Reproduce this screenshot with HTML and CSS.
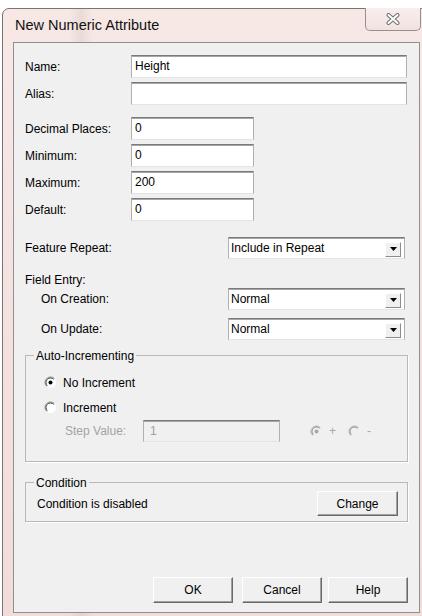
FILE: index.html
```html
<!DOCTYPE html>
<html lang="en">
<head>
<meta charset="utf-8">
<title>New Numeric Attribute</title>
<link rel="stylesheet" href="styles.css">
</head>
<body>
<div class="window">
  <div class="titlebar">
    <span class="title">New Numeric Attribute</span>
    <button class="close" aria-label="Close">
      <svg width="14" height="12" viewBox="0 0 14 12">
        <path d="M2.5 2 L11.5 10 M11.5 2 L2.5 10" stroke="#6e6e74" stroke-width="4" stroke-linecap="round"/>
        <path d="M2.5 2 L11.5 10 M11.5 2 L2.5 10" stroke="#ffffff" stroke-width="2" stroke-linecap="round"/>
      </svg>
    </button>
  </div>

  <div class="client">
    <div class="rows">
      <label>Name:</label><div class="edit wide">Height</div>
      <label>Alias:</label><div class="edit wide"></div>
    </div>

    <div class="rows numbers">
      <label>Decimal Places:</label><div class="edit short">0</div>
      <label>Minimum:</label><div class="edit short">0</div>
      <label>Maximum:</label><div class="edit short">200</div>
      <label>Default:</label><div class="edit short">0</div>
    </div>

    <div class="line repeat">
      <label>Feature Repeat:</label>
      <div class="combo"><span>Include in Repeat</span><span class="drop"><svg width="7" height="4" viewBox="0 0 7 4"><path d="M0 0 H7 L3.5 4 Z" fill="#000"/></svg></span></div>
    </div>

    <div class="caption">Field Entry:</div>
    <div class="line sub">
      <label>On Creation:</label>
      <div class="combo"><span>Normal</span><span class="drop"><svg width="7" height="4" viewBox="0 0 7 4"><path d="M0 0 H7 L3.5 4 Z" fill="#000"/></svg></span></div>
    </div>
    <div class="line sub update">
      <label>On Update:</label>
      <div class="combo"><span>Normal</span><span class="drop"><svg width="7" height="4" viewBox="0 0 7 4"><path d="M0 0 H7 L3.5 4 Z" fill="#000"/></svg></span></div>
    </div>

    <fieldset class="group auto">
      <legend>Auto-Incrementing</legend>
      <div class="opt first">
        <svg class="radio" width="13" height="13" viewBox="0 0 13 13">
          <circle cx="6.5" cy="6.5" r="5.5" fill="#fff"/>
          <path d="M2.6 10.4 A5.5 5.5 0 0 1 10.4 2.6" stroke="#8c8c8c" fill="none"/>
          <path d="M3.3 9.7 A4.5 4.5 0 0 1 9.7 3.3" stroke="#3c3c3c" fill="none"/>
          <circle cx="6.5" cy="6.5" r="2" fill="#000"/>
        </svg>
        <span>No Increment</span>
      </div>
      <div class="opt">
        <svg class="radio" width="13" height="13" viewBox="0 0 13 13">
          <circle cx="6.5" cy="6.5" r="5.5" fill="#fff"/>
          <path d="M2.6 10.4 A5.5 5.5 0 0 1 10.4 2.6" stroke="#8c8c8c" fill="none"/>
          <path d="M3.3 9.7 A4.5 4.5 0 0 1 9.7 3.3" stroke="#3c3c3c" fill="none"/>
        </svg>
        <span>Increment</span>
      </div>
      <div class="step">
        <span class="step-label">Step Value:</span>
        <div class="edit stepbox">1</div>
        <svg class="radio off plus" width="13" height="13" viewBox="0 0 13 13">
          <path d="M2.6 10.4 A5.5 5.5 0 0 1 10.4 2.6" stroke="#b4b4b4" fill="none"/>
          <path d="M3.3 9.7 A4.5 4.5 0 0 1 9.7 3.3" stroke="#8a8a8a" fill="none"/>
          <circle cx="6.5" cy="6.5" r="2" fill="#a8a8a8"/>
        </svg>
        <span class="sign">+</span>
        <svg class="radio off minus" width="13" height="13" viewBox="0 0 13 13">
          <path d="M2.6 10.4 A5.5 5.5 0 0 1 10.4 2.6" stroke="#b4b4b4" fill="none"/>
          <path d="M3.3 9.7 A4.5 4.5 0 0 1 9.7 3.3" stroke="#8a8a8a" fill="none"/>
        </svg>
        <span class="sign">-</span>
      </div>
    </fieldset>

    <fieldset class="group cond">
      <legend>Condition</legend>
      <div class="cond-row">
        <span class="cond-text">Condition is disabled</span>
        <button class="btn change">Change</button>
      </div>
    </fieldset>

    <div class="footer">
      <button class="btn ok">OK</button>
      <button class="btn">Cancel</button>
      <button class="btn">Help</button>
    </div>
  </div>
</div>
</body>
</html>
```

FILE: styles.css
```css
html, body {
  margin: 0;
  padding: 0;
  background: #fff;
  overflow: hidden;
}

body {
  width: 422px;
  height: 616px;
  font-family: "Liberation Sans", Arial, sans-serif;
  font-size: 12px;
  color: #000;
}

/* window frame with a pale glass tint */
.window {
  margin: 8px 0 0 2px;
  width: 429px;
  height: 620px;
  box-sizing: border-box;
  padding: 0 10px;
  border: 1px solid #7c7272;
  border-radius: 7px 7px 0 0;
  background:
    linear-gradient(90deg, rgba(255,255,255,0) 66px, rgba(120,100,100,0.10) 78px, rgba(255,255,255,0) 90px),
    linear-gradient(#f7e8e6, #f2dcd9);
}

.titlebar {
  height: 33px;
  display: flex;
  align-items: flex-start;
}

.title {
  padding-left: 2px;
  line-height: 33px;
  font-size: 14.5px;
  color: #111;
}

.close {
  margin: -1px -1px 0 auto;
  width: 56px;
  height: 23px;
  padding: 0;
  border: 1px solid #9a8f90;
  border-top: none;
  border-radius: 0 0 5px 5px;
  background: linear-gradient(#f8eeed, #f1e2e0);
  display: flex;
  align-items: center;
  justify-content: center;
}

/* dialog body */
.client {
  width: 407px;
  height: 571px;
  box-sizing: border-box;
  border: 1px solid #8f8f8f;
  background: #f0f0f0;
  padding: 12px 11px 9px 11px;
  display: flex;
  flex-direction: column;
}

.rows {
  display: grid;
  grid-template-columns: 106px auto;
  grid-auto-rows: 23px;
  row-gap: 4px;
  align-items: center;
}

.rows.numbers {
  margin-top: 12px;
}

.edit {
  height: 23px;
  box-sizing: border-box;
  background: #fff;
  border: 1px solid;
  border-color: #7a7a7a #b0b0b0 #e4e4e4 #b0b0b0;
  box-shadow: inset 0 1px 0 #a6a6a6;
  padding: 0 3px;
  line-height: 21px;
}

.edit.wide { width: 276px; }
.edit.short { width: 123px; }

.line {
  display: flex;
  align-items: center;
}

.line label {
  width: 203px;
  flex: none;
}

.line.repeat { margin-top: 16px; }
.line.sub label { padding-left: 16px; box-sizing: border-box; }
.line.update { margin-top: 8px; }

.caption {
  margin-top: 14px;
  line-height: 15px;
}

.combo {
  width: 177px;
  height: 22px;
  box-sizing: border-box;
  display: flex;
  align-items: center;
  background: #fff;
  border: 1px solid;
  border-color: #7a7a7a #b0b0b0 #e4e4e4 #b0b0b0;
  box-shadow: inset 0 1px 0 #a6a6a6;
  padding-left: 2px;
}

.drop {
  margin: 2px 3px 0 auto;
  width: 16px;
  height: 15px;
  box-sizing: border-box;
  border: 1px solid;
  border-color: #fff #8c8c8c #8c8c8c #fff;
  background: #f0f0f0;
  display: flex;
  align-items: center;
  justify-content: center;
}

/* etched group boxes */
.group {
  width: 383px;
  box-sizing: border-box;
  min-width: 0;
  margin: 7px 0 0 0;
  padding: 0 0 19px 8px;
  border: 1px solid #b8b8b8;
  box-shadow: 1px 1px 0 #fff;
}

.group legend {
  padding: 2px 2px 0 2px;
  line-height: 15px;
}

.opt {
  display: flex;
  align-items: center;
  height: 17px;
  margin-top: 8px;
  margin-left: 10px;
}

.opt.first { margin-top: 10px; }
.opt span { margin-left: 6px; }

.step {
  display: flex;
  align-items: center;
  height: 22px;
  margin-top: 4px;
  color: #a3a3a3;
}

.step-label {
  margin-left: 31px;
  width: 78px;
}

.edit.stepbox {
  width: 137px;
  height: 22px;
  line-height: 20px;
  background: #f0f0f0;
  color: #9e9e9e;
  padding-left: 6px;
}

.radio.plus { margin-left: 30px; }
.radio.minus { margin-left: 12px; }
.sign { margin-left: 6px; color: #a6a6a6; }

.group.cond {
  margin-top: 12px;
  padding-bottom: 5px;
}

.cond-row {
  display: flex;
  align-items: center;
  height: 25px;
}

.cond-text { margin-left: 3px; }

.btn {
  width: 80px;
  height: 26px;
  box-sizing: border-box;
  padding: 0;
  font: inherit;
  color: #000;
  background: #f0f0f0;
  border: 1px solid;
  border-color: #fff #6a6a6a #6a6a6a #fff;
  box-shadow: inset -1px -1px 0 #a0a0a0;
}

.btn.change {
  margin: 0 9px 0 auto;
  width: 81px;
  height: 25px;
}

.footer {
  margin-top: auto;
  display: flex;
  justify-content: flex-end;
  gap: 6px;
}

.btn.ok { margin-right: 3px; }
```
